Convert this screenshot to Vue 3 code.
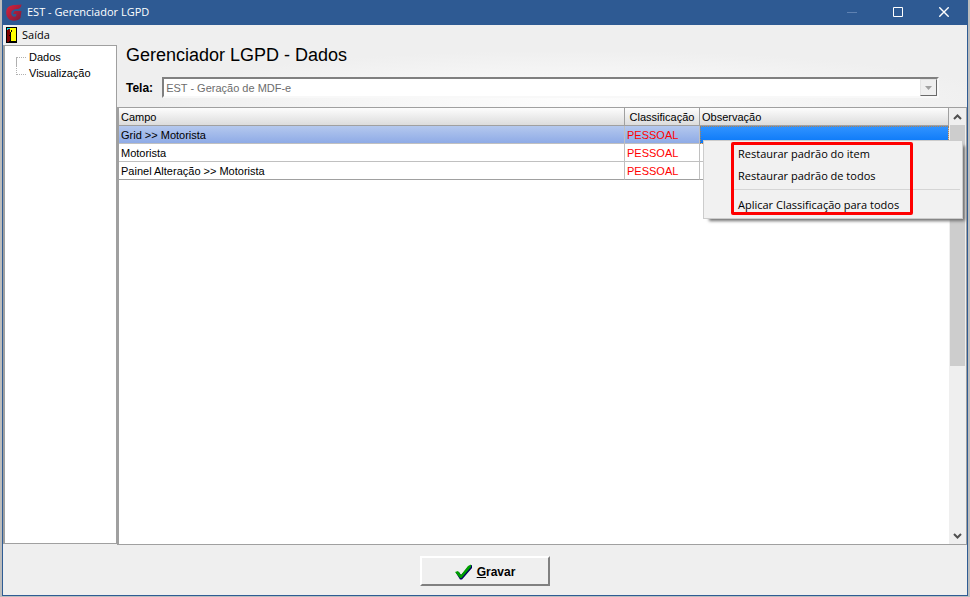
<script setup>
import { ref } from 'vue'

const screens = ['EST - Geração de MDF-e']
const screen = ref(screens[0])
const treeItems = ['Dados', 'Visualização']
const selected = ref(0)
const rows = [
  { field: 'Grid >> Motorista', level: 'PESSOAL', note: '' },
  { field: 'Motorista', level: 'PESSOAL', note: '' },
  { field: 'Painel Alteração >> Motorista', level: 'PESSOAL', note: '' },
]
</script>

<template>
  <div class="desktop">
    <div class="window">
      <header class="titlebar">
        <svg class="logo" viewBox="0 0 16 17" aria-hidden="true">
          <defs>
            <linearGradient id="logo-red" x1="0" y1="0" x2="1" y2="1">
              <stop offset="0" stop-color="#d8233c" />
              <stop offset="1" stop-color="#7d1a3c" />
            </linearGradient>
          </defs>
          <path fill="url(#logo-red)" d="M15.500 0.500C11 1.200 4 0 1 4.500C-0.800 8.500 0.300 13.500 4 16C8 17.500 13 16.500 14.500 14L15.500 7H8.500L7 10H10.500L10 12.300C7.500 13.500 5 12 5.200 9C5.500 6 8 5.200 12 5C14 4.600 15.300 3 15.500 0.500Z" />
        </svg>
        <span class="caption">EST - Gerenciador LGPD</span>
        <button class="win-btn" disabled aria-label="Minimizar">
          <svg viewBox="0 0 10 10" class="glyph dim"><path d="M0 5.500H10" /></svg>
        </button>
        <button class="win-btn" aria-label="Maximizar">
          <svg viewBox="0 0 10 10" class="glyph"><path d="M0.500 0.500H9.500V9.500H0.500Z" /></svg>
        </button>
        <button class="win-btn" aria-label="Fechar">
          <svg viewBox="0 0 10 10" class="glyph cross"><path d="M0.300 0.300L9.700 9.700M9.700 0.300L0.300 9.700" /></svg>
        </button>
      </header>

      <nav class="menubar">
        <button class="menu-entry">
          <svg class="door" viewBox="0 0 11 16" aria-hidden="true" shape-rendering="crispEdges">
            <path fill="#000" d="M0 0H11V16H0Z" />
            <path fill="#ff0" d="M4 1H10V14H4Z" />
            <path fill="#800000" d="M1 3H2V2H4V14H3V15H1Z" />
            <path fill="#00e0e8" d="M1 1H4V2H2V3H1Z" />
            <path fill="#000" d="M4 5H5V14H4ZM5 3H6V5H5ZM3 8H4V9H3Z" />
          </svg>
          Saída
        </button>
      </nav>

      <div class="body">
        <aside class="tree">
          <ul>
            <li v-for="(item, i) in treeItems" :key="item">
              <button class="node" @click="selected = i">{{ item }}</button>
            </li>
          </ul>
        </aside>

        <main class="content">
          <div class="heading">
            <h1>Gerenciador LGPD - Dados</h1>
            <div class="field">
              <label for="screen">Tela:</label>
              <div class="combo">
                <select id="screen" v-model="screen" disabled>
                  <option v-for="s in screens" :key="s">{{ s }}</option>
                </select>
                <span class="drop"><svg viewBox="0 0 7 4"><path d="M0 0H7L3.500 4Z" /></svg></span>
              </div>
            </div>
          </div>

          <div class="grid">
            <div class="sheet">
              <table>
                <colgroup>
                  <col />
                  <col class="c-level" />
                  <col class="c-note" />
                </colgroup>
                <thead>
                  <tr>
                    <th>Campo</th>
                    <th class="center">Classificação</th>
                    <th>Observação</th>
                  </tr>
                </thead>
                <tbody>
                  <tr v-for="(row, i) in rows" :key="row.field" :class="{ active: i === 0 }">
                    <td>{{ row.field }}</td>
                    <td class="level">{{ row.level }}</td>
                    <td class="note">{{ row.note }}</td>
                  </tr>
                </tbody>
              </table>
            </div>
            <div class="scrollbar">
              <button aria-label="Rolar para cima"><svg viewBox="0 0 9 6"><path d="M1 5L4.500 1.500L8 5" /></svg></button>
              <div class="track"><div class="thumb"></div></div>
              <button aria-label="Rolar para baixo"><svg viewBox="0 0 9 6"><path d="M1 1L4.500 4.500L8 1" /></svg></button>
            </div>

            <div class="popup" role="menu">
              <button role="menuitem">Restaurar padrão do item</button>
              <button role="menuitem">Restaurar padrão de todos</button>
              <hr />
              <button role="menuitem">Aplicar Classificação para todos</button>
              <div class="marker"></div>
            </div>
          </div>
        </main>
      </div>

      <footer class="footer">
        <button class="save">
          <svg viewBox="0 0 17 16" aria-hidden="true">
            <path fill="#000060" d="M1 9L4 8L6 11L14 2L17 1V4L7 15.500H5Z" />
            <path fill="#00a000" d="M0 8L3 7L6 11L13 2L16 0.500V3L6.500 14H5Z" />
          </svg>
          <span><u>G</u>ravar</span>
        </button>
      </footer>
    </div>
  </div>
</template>

<style>
body {
  margin: 0;
}
</style>

<style scoped>
* {
  box-sizing: border-box;
}
button {
  margin: 0;
  padding: 0;
  border: 0;
  background: none;
  color: inherit;
  font: inherit;
}
svg {
  display: block;
  flex: none;
}
.desktop {
  display: flex;
  height: 100vh;
  padding: 0 2px 1px;
  background: #bdbdbd;
  font-family: "Liberation Sans", Arial, sans-serif;
  font-size: 11px;
  color: #000;
}
.window {
  flex: 1;
  min-width: 0;
  display: flex;
  flex-direction: column;
  border: 1px solid #2f5c94;
  border-top: 0;
  background: #efefef;
}
.titlebar {
  display: flex;
  align-items: center;
  height: 25px;
  padding-left: 3px;
  background: #2e5a93;
  color: #fff;
  font-family: "Open Sans", "Noto Sans", sans-serif;
}
.logo {
  width: 16px;
  height: 17px;
}
.caption {
  flex: 1;
  padding: 0 0 2px 5px;
}
.win-btn {
  display: flex;
  align-items: center;
  justify-content: center;
  width: 46px;
  height: 25px;
  padding-bottom: 1px;
}
.glyph {
  width: 10px;
  height: 10px;
  fill: none;
  stroke: #fff;
}
.dim {
  stroke: #5f82b2;
}
.cross {
  stroke-width: 1.4;
}
.menubar {
  display: flex;
  height: 19px;
  padding-left: 3px;
  font-family: "Open Sans", "Noto Sans", sans-serif;
}
.menu-entry {
  display: flex;
  align-items: center;
  gap: 5px;
}
.door {
  width: 11px;
  height: 16px;
}
.body {
  flex: 1;
  min-height: 0;
  display: flex;
}
.tree {
  width: 114px;
  margin: 1px 0;
  border: 1px solid #a0a0a0;
  border-left-width: 2px;
  background: #fff;
}
.tree ul {
  margin: 0;
  padding: 3px 0 0 11px;
  list-style: none;
}
.tree li {
  display: flex;
  gap: 3px;
  height: 16px;
}
.tree li::before {
  content: "";
  width: 9px;
  height: 8px;
  margin-top: 8px;
  border-left: 1px dotted #b0b0b0;
  border-top: 1px dotted #b0b0b0;
}
.tree li + li::before {
  height: 17px;
  margin-top: -8px;
  border-top: 0;
  border-bottom: 1px dotted #b0b0b0;
}
.node {
  line-height: 16px;
}
.content {
  flex: 1;
  min-width: 0;
  display: flex;
  flex-direction: column;
}
.heading {
  height: 63px;
  padding: 0 28px 0 9px;
  background: radial-gradient(ellipse 50% 80% at 54% 90%, #fdfdfd, #efefef);
}
h1 {
  margin: 0;
  padding-top: 1px;
  font-size: 18px;
  line-height: 20px;
  font-weight: 400;
}
.field {
  display: flex;
  align-items: center;
  gap: 9px;
  padding-top: 12px;
}
.field label {
  font-size: 12px;
  font-weight: 700;
}
.combo {
  flex: 1;
  display: flex;
  height: 21px;
  border: 2px solid;
  border-color: #808080 #f8f8f8 #f8f8f8 #808080;
  background: #fff;
}
.combo select {
  flex: 1;
  padding: 1px 2px 0;
  border: 0;
  appearance: none;
  background: #fff;
  color: #6d6d6d;
  opacity: 1;
  font: inherit;
}
.drop {
  display: flex;
  align-items: center;
  justify-content: center;
  width: 17px;
  border: 1px solid;
  border-color: #e3e3e3 #696969 #696969 #e3e3e3;
  background: #efefef;
}
.drop svg {
  width: 7px;
  height: 4px;
  fill: #a0a0a0;
}
.grid {
  position: relative;
  flex: 1;
  min-height: 0;
  display: flex;
  border: 1px solid #a0a0a0;
  border-left-width: 2px;
  background: #fff;
}
.sheet {
  flex: 1;
  min-width: 0;
}
table {
  width: 100%;
  table-layout: fixed;
  border-collapse: separate;
  border-spacing: 0;
}
.c-level {
  width: 75px;
}
.c-note {
  width: 249px;
}
th,
td {
  height: 18px;
  padding: 1px 2px 0;
  border-right: 1px solid #c0c0c0;
  border-bottom: 1px solid #c0c0c0;
  line-height: 16px;
  text-align: left;
  font-weight: 400;
  white-space: nowrap;
}
th {
  border-color: #a0a0a0;
  background: linear-gradient(#fdfdfd, #dcdcdc);
}
th.center {
  text-align: center;
}
tbody tr:last-child td {
  border-bottom-color: #a0a0a0;
}
.level {
  color: #f00;
}
.active td {
  background: linear-gradient(#b4c8ee, #8fabe6);
}
.active .note {
  background: linear-gradient(#3294ff, #0a78f8);
  outline: 1px dotted #b08050;
  outline-offset: -1px;
}
.scrollbar {
  display: flex;
  flex-direction: column;
  width: 17px;
  background: #efefef;
}
.scrollbar button {
  display: flex;
  align-items: center;
  justify-content: center;
  height: 17px;
}
.scrollbar svg {
  width: 9px;
  height: 6px;
  fill: none;
  stroke: #505050;
  stroke-width: 2;
}
.track {
  flex: 1;
}
.thumb {
  width: 15px;
  height: 60%;
  margin-left: 1px;
  background: #cdcdcd;
}
.popup {
  position: absolute;
  top: 32px;
  right: 3px;
  width: 260px;
  padding: 1px 2px 3px;
  border: 1px solid #ccc;
  background: #f1f1f1;
  box-shadow: 4px 4px 3px -2px #707070;
  font-family: "Open Sans", "Noto Sans", sans-serif;
}
.popup button {
  display: block;
  width: 100%;
  height: 22px;
  padding-left: 32px;
  text-align: left;
}
.popup hr {
  margin: 3px 0 3px 28px;
  border: 0;
  border-top: 1px solid #d5d5d5;
}
.marker {
  position: absolute;
  top: 1px;
  left: 27px;
  width: 182px;
  height: 73px;
  border: 3px solid #f00;
  border-radius: 2px;
}
.footer {
  display: flex;
  align-items: center;
  justify-content: center;
  height: 50px;
  padding-top: 2px;
}
.save {
  display: flex;
  align-items: center;
  justify-content: center;
  gap: 5px;
  width: 130px;
  height: 30px;
  padding-top: 2px;
  border: 2px solid;
  border-color: #fff #808080 #808080 #fff;
  background: #efefef;
  font-size: 12px;
  font-weight: 700;
}
.save svg {
  width: 17px;
  height: 16px;
}
</style>
